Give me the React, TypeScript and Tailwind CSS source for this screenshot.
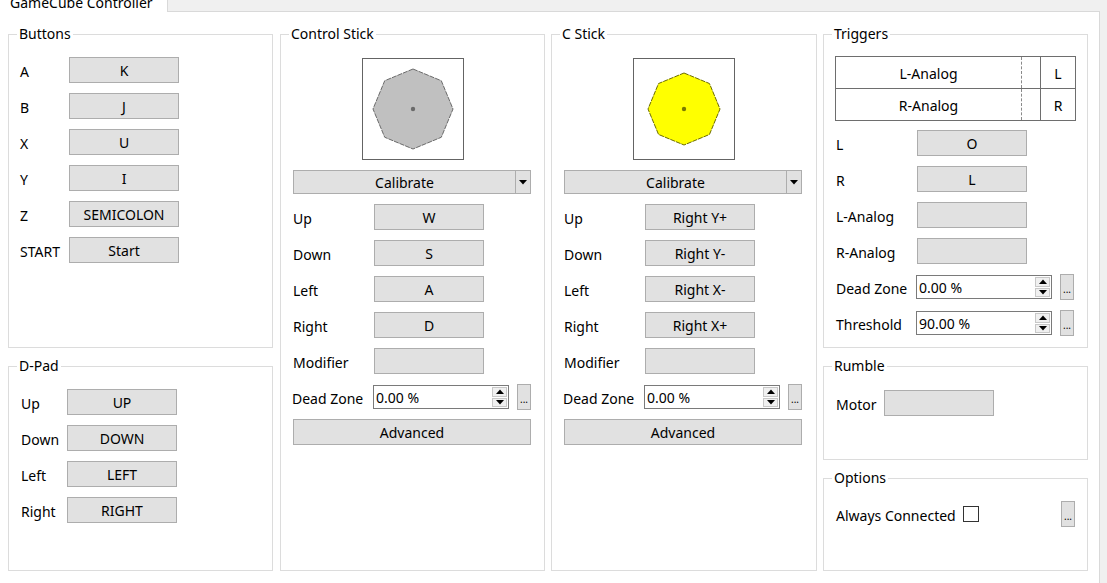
import type { ReactNode } from "react";

const FONT = "font-['Noto_Sans','Open_Sans',sans-serif]";

type Pair = [string, string];

const BUTTONS: Pair[] = [
  ["A", "K"],
  ["B", "J"],
  ["X", "U"],
  ["Y", "I"],
  ["Z", "SEMICOLON"],
  ["START", "Start"],
];

const DPAD: Pair[] = [
  ["Up", "UP"],
  ["Down", "DOWN"],
  ["Left", "LEFT"],
  ["Right", "RIGHT"],
];

const MAIN_STICK: Pair[] = [
  ["Up", "W"],
  ["Down", "S"],
  ["Left", "A"],
  ["Right", "D"],
  ["Modifier", ""],
];

const C_STICK: Pair[] = [
  ["Up", "Right Y+"],
  ["Down", "Right Y-"],
  ["Left", "Right X-"],
  ["Right", "Right X+"],
  ["Modifier", ""],
];

const TRIGGERS: Pair[] = [
  ["L", "O"],
  ["R", "L"],
  ["L-Analog", ""],
  ["R-Analog", ""],
];

// Group box with the caption sitting on the top border
const Group = ({
  title,
  className,
  children,
}: {
  title: string;
  className: string;
  children: ReactNode;
}) => (
  <fieldset className={`border border-[#dcdcdc] p-0 m-0 min-w-0 ${className}`}>
    <legend className="ml-[8px] px-[2px] leading-[20px]">{title}</legend>
    {children}
  </fieldset>
);

const MapButton = ({ text, wide }: { text: string; wide?: boolean }) => (
  <div
    className={`flex h-[26px] items-center justify-center border border-[#adadad] bg-[#e1e1e1] pt-[2px] leading-none ${
      wide ? "w-[238px]" : "w-[110px]"
    }`}
  >
    {text}
  </div>
);

const MapRow = ({ label, value, labelW }: { label: string; value: string; labelW: string }) => (
  <div className="flex items-center">
    <span className={`${labelW} shrink-0 pt-[2px]`}>{label}</span>
    <MapButton text={value} />
  </div>
);

const MoreButton = () => (
  <div className="flex h-[26px] w-[14px] shrink-0 items-end justify-center border border-[#adadad] bg-[#e1e1e1] pb-[5px] text-[10px] leading-none">
    ...
  </div>
);

const Arrow = ({ up }: { up?: boolean }) => (
  <svg width="8" height="5" viewBox="0 0 8 5">
    <path d={up ? "M0 5 L4 0.5 L8 5 Z" : "M0 0 L8 0 L4 4.5 Z"} fill="#000" />
  </svg>
);

const SpinBox = ({ value }: { value: string }) => (
  <div className="flex h-[24px] w-[136px] shrink-0 items-stretch border border-[#7a7a7a] bg-white">
    <span className="flex flex-1 items-center pl-[2px] pt-[2px] leading-none">{value}</span>
    <div className="my-[1px] mr-[1px] flex w-[15px] flex-col gap-[1px]">
      <div className="flex flex-1 items-center justify-center border border-[#c8c8c8] bg-[#f0f0f0]">
        <Arrow up />
      </div>
      <div className="flex flex-1 items-center justify-center border border-[#c8c8c8] bg-[#f0f0f0]">
        <Arrow />
      </div>
    </div>
  </div>
);

const SettingRow = ({ label, value, labelW }: { label: string; value: string; labelW: string }) => (
  <div className="flex h-[26px] items-center">
    <span className={`${labelW} shrink-0 pt-[2px]`}>{label}</span>
    <SpinBox value={value} />
    <div className="ml-[8px]">
      <MoreButton />
    </div>
  </div>
);

const Gate = ({ r, fill, stroke, dot }: { r: number; fill: string; stroke: string; dot: string }) => {
  const pts = Array.from({ length: 8 }, (_, i) => {
    const a = (i * Math.PI) / 4 - Math.PI / 2;
    return `${(50 + r * Math.cos(a)).toFixed(2)},${(50 + r * Math.sin(a)).toFixed(2)}`;
  }).join(" ");
  return (
    <div className="mx-auto h-[102px] w-[102px] border border-[#646464] bg-white">
      <svg width="100" height="100" viewBox="0 0 100 100">
        <polygon points={pts} fill={fill} stroke={stroke} strokeWidth="1" strokeDasharray="5 1" />
        <circle cx="50" cy="50" r="2.2" fill={dot} />
      </svg>
    </div>
  );
};

const Calibrate = () => (
  <div className="flex h-[24px] w-[238px] border border-[#adadad] bg-[#e1e1e1]">
    <span className="flex flex-1 items-center justify-center pt-[2px] leading-none">Calibrate</span>
    <div className="flex w-[15px] items-center justify-center border-l border-[#adadad]">
      <Arrow />
    </div>
  </div>
);

const StickGroup = ({
  title,
  rows,
  gate,
}: {
  title: string;
  rows: Pair[];
  gate: ReactNode;
}) => (
  <Group title={title} className="h-[547px]">
    <div className="flex flex-col px-[12px] pt-[14px]">
      {gate}
      <div className="mt-[10px]">
        <Calibrate />
      </div>
      <div className="mt-[10px] flex flex-col gap-[10px]">
        {rows.map(([l, v]) => (
          <MapRow key={l} label={l} value={v} labelW="w-[81px]" />
        ))}
        <div className="-ml-px">
          <SettingRow label="Dead Zone" value="0.00 %" labelW="w-[81px]" />
        </div>
      </div>
      <div className="mt-[9px]">
        <MapButton text="Advanced" wide />
      </div>
    </div>
  </Group>
);

const TriggerTable = () => (
  <div className="w-[241px] border border-[#6e6e6e]">
    {["L", "R"].map((k, i) => (
      <div key={k} className={`flex ${i ? "h-[32px] border-t border-[#6e6e6e]" : "h-[31px]"}`}>
        <span className="flex w-[186px] items-center justify-center border-r border-dashed border-[#8a8a8a] pt-[2px] leading-none">
          {k}-Analog
        </span>
        <span className="w-[19px] border-r border-[#6e6e6e]" />
        <span className="flex flex-1 items-center justify-center pt-[2px] leading-none">{k}</span>
      </div>
    ))}
  </div>
);

export default function App() {
  return (
    <div className={`flex h-[583px] w-[1107px] flex-col overflow-hidden bg-[#f0f0f0] text-[14px] text-black ${FONT}`}>
      {/* tab strip */}
      <div className="flex h-[12px] shrink-0">
        <div className="w-[167px] overflow-hidden bg-white">
          <div className="-mt-[7px] pl-[10px] leading-[20px] whitespace-nowrap">GameCube Controller</div>
        </div>
        <div className="w-[933px] border-b border-l border-[#d9d9d9]" />
      </div>

      {/* tab page */}
      <div className="flex h-[571px] w-[1100px] border-r border-[#d9d9d9] bg-white pl-[8px] pt-[12px]">
        <div className="flex w-[265px] flex-col gap-[8px]">
          <Group title="Buttons" className="h-[324px]">
            <div className="flex flex-col gap-[10px] pl-[11px] pt-[13px]">
              {BUTTONS.map(([l, v]) => (
                <MapRow key={l} label={l} value={v} labelW="w-[49px]" />
              ))}
            </div>
          </Group>
          <Group title="D-Pad" className="h-[215px]">
            <div className="flex flex-col gap-[10px] pl-[12px] pt-[13px]">
              {DPAD.map(([l, v]) => (
                <MapRow key={l} label={l} value={v} labelW="w-[46px]" />
              ))}
            </div>
          </Group>
        </div>

        <div className="ml-[7px] w-[265px]">
          <StickGroup
            title="Control Stick"
            rows={MAIN_STICK}
            gate={<Gate r={40} fill="#c0c0c0" stroke="#6a6a6a" dot="#6a6a6a" />}
          />
        </div>

        <div className="ml-[6px] w-[266px]">
          <StickGroup
            title="C Stick"
            rows={C_STICK}
            gate={<Gate r={36} fill="#ffff00" stroke="#6b6b00" dot="#7a7a00" />}
          />
        </div>

        <div className="ml-[6px] flex w-[265px] flex-col gap-[8px]">
          <Group title="Triggers" className="h-[324px]">
            <div className="flex flex-col pl-[11px] pt-[12px]">
              <TriggerTable />
              <div className="mt-[9px] flex flex-col gap-[10px] pl-px">
                {TRIGGERS.map(([l, v]) => (
                  <MapRow key={l} label={l} value={v} labelW="w-[81px]" />
                ))}
                <SettingRow label="Dead Zone" value="0.00 %" labelW="w-[80px]" />
                <SettingRow label="Threshold" value="90.00 %" labelW="w-[80px]" />
              </div>
            </div>
          </Group>
          <Group title="Rumble" className="h-[104px]">
            <div className="pl-[12px] pt-[14px]">
              <MapRow label="Motor" value="" labelW="w-[48px]" />
            </div>
          </Group>
          <Group title="Options" className="h-[103px]">
            <div className="mt-[13px] flex h-[26px] items-center pl-[12px] pr-[12px]">
              <span className="pt-[2px]">Always Connected</span>
              <span className="ml-[7px] h-[16px] w-[16px] border border-[#333333] bg-white" />
              <span className="flex-1" />
              <MoreButton />
            </div>
          </Group>
        </div>
      </div>
    </div>
  );
}
